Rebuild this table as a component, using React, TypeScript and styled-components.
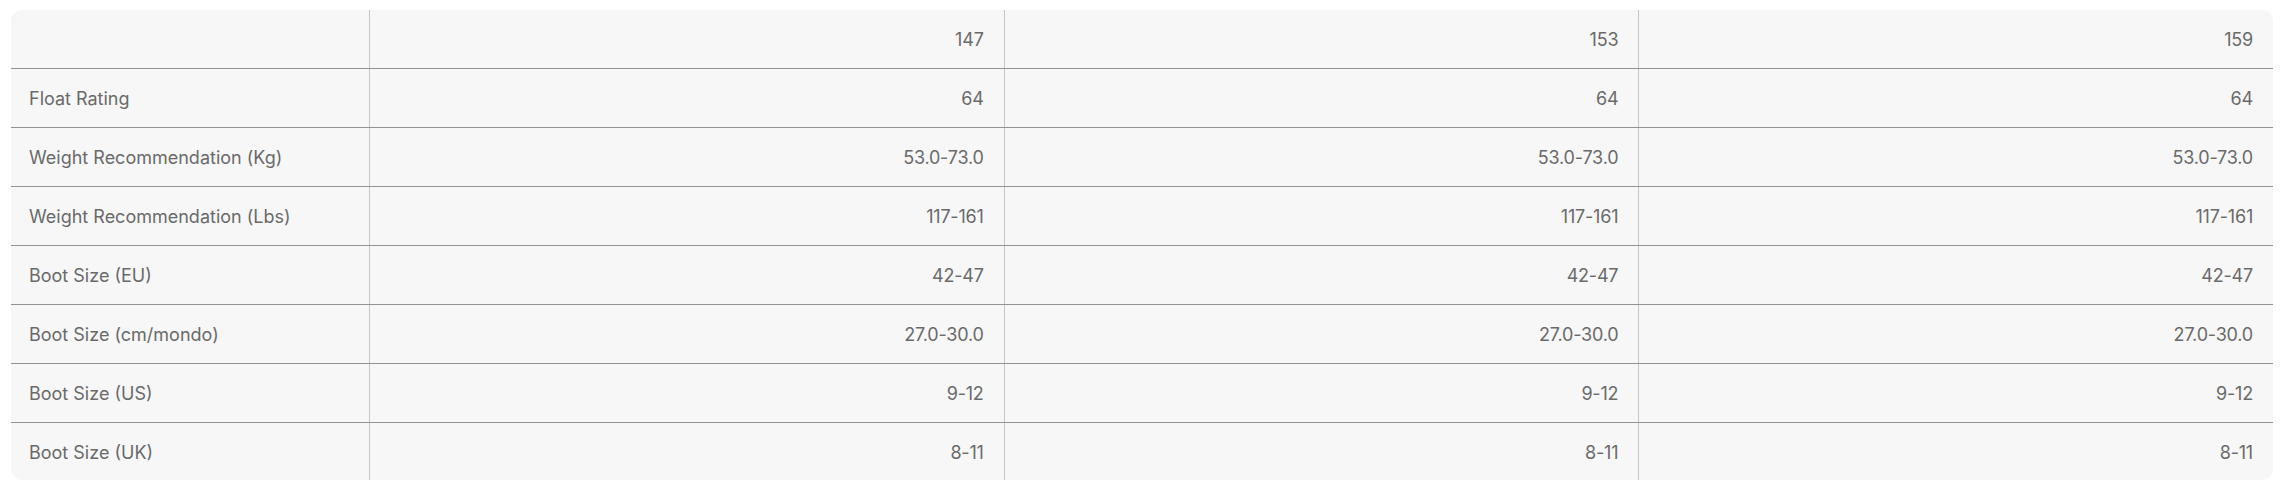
import React from "react";
import styled, { createGlobalStyle } from "styled-components";

const Global = createGlobalStyle`
  html, body { margin: 0; padding: 0; background: #ffffff; }
  body { font-family: Inter, "Liberation Sans", Arial, sans-serif; }
`;

const Page = styled.div`
  padding: 10px 15px 0 11px;
`;

const Card = styled.div`
  background: #f7f7f7;
  border-radius: 11px;
  overflow: hidden;
  width: 2262px;
`;

const Row = styled.div<{ $last?: boolean }>`
  display: grid;
  grid-template-columns: 358px 1fr 1fr 1fr;
  height: ${(p) => (p.$last ? 57 : 58)}px;
  border-bottom: ${(p) => (p.$last ? "none" : "1px solid #939393")};
`;

const Label = styled.div`
  display: flex;
  align-items: center;
  padding: 1px 0 0 18px;
  font-size: 18px;
  color: #6a6a6a;
  letter-spacing: 0;
`;

const Value = styled.div`
  display: flex;
  align-items: center;
  justify-content: flex-end;
  padding: 1px 20px 0 0;
  border-left: 1.5px solid #c6c6c6;
  font-size: 18px;
  color: #6a6a6a;
  letter-spacing: -0.2px;
`;

const rows: [string, string][] = [
  ["", "147|153|159"],
  ["Float Rating", "64|64|64"],
  ["Weight Recommendation (Kg)", "53.0-73.0|53.0-73.0|53.0-73.0"],
  ["Weight Recommendation (Lbs)", "117-161|117-161|117-161"],
  ["Boot Size (EU)", "42-47|42-47|42-47"],
  ["Boot Size (cm/mondo)", "27.0-30.0|27.0-30.0|27.0-30.0"],
  ["Boot Size (US)", "9-12|9-12|9-12"],
  ["Boot Size (UK)", "8-11|8-11|8-11"],
];

export default function App() {
  return (
    <Page>
      <Global />
      <Card>
        {rows.map(([label, vals], i) => (
          <Row key={i} $last={i === rows.length - 1}>
            <Label>{label}</Label>
            {vals.split("|").map((v, j) => (
              <Value key={j}>{v}</Value>
            ))}
          </Row>
        ))}
      </Card>
    </Page>
  );
}
